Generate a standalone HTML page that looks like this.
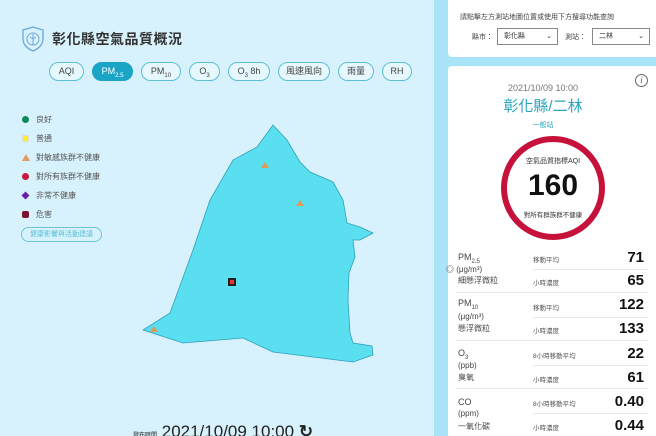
<!DOCTYPE html>
<html><head><meta charset="utf-8"><style>
*{margin:0;padding:0;box-sizing:border-box}
html,body{width:656px;height:436px;overflow:hidden}
body{background:#a9e3f8;font-family:"Liberation Sans","Noto Sans CJK TC",sans-serif;position:relative;color:#333}
.left{position:absolute;left:0;top:0;width:434px;height:436px;background:#d7f2fd}
.title{position:absolute;left:52px;top:29px;font-size:14px;font-weight:bold;color:#333;letter-spacing:0.5px}
.tabs .t{position:absolute;top:62px;height:19px;border:1px solid #5bbfd3;border-radius:10px;font-size:9px;color:#444;text-align:center;line-height:17px;background:#e6f7fd}
.tabs .on{background:#1aa5c6;color:#fff;border-color:#1aa5c6}
sub{font-size:6px}
.lg{position:absolute;left:22px;font-size:8px;color:#555}
.lg i{display:inline-block;width:7px;height:7px;margin-right:7px;vertical-align:-1px}
.btn{position:absolute;left:21px;top:227px;width:81px;height:15px;border:1px solid #6cc5d6;border-radius:8px;font-size:7px;color:#5bbfd3;text-align:center;line-height:13px}
.card1{position:absolute;left:448px;top:0;width:208px;height:57px;background:#fff;border-radius:0 0 0 4px}
.card2{position:absolute;left:448px;top:66px;width:208px;height:370px;background:#fff;border-radius:4px 0 0 0}
.sel{position:absolute;top:28px;height:17px;border:1px solid #888;font-size:7px;line-height:15px;padding-left:6px;color:#333}
.row{position:absolute;left:10px;width:190px;font-size:8px;color:#444}
.lab{position:absolute;left:85px;font-size:6.5px;color:#555}
.val{position:absolute;right:12px;font-size:15px;font-weight:bold;color:#111}
.ln{position:absolute;height:1px;background:#e8e8e8}
</style></head><body>
<div class="left">
<svg style="position:absolute;left:21px;top:26px" width="24" height="26" viewBox="0 0 24 26"><path d="M12 1 L22 4 V13 C22 19 17 23 12 25 C7 23 2 19 2 13 V4 Z" fill="none" stroke="#6aa6d6" stroke-width="1.3"/><circle cx="12" cy="13" r="6" fill="none" stroke="#6aa6d6" stroke-width="1"/><path d="M12 8 V19 M12 13 L9 11 M12 13 L15 11" stroke="#6aa6d6" stroke-width="1"/></svg>
<div class="title">彰化縣空氣品質概況</div>
<div class="tabs">
<div class="t" style="left:49px;width:35px">AQI</div>
<div class="t on" style="left:92px;width:41px">PM<sub>2.5</sub></div>
<div class="t" style="left:141px;width:40px">PM<sub>10</sub></div>
<div class="t" style="left:189px;width:31px">O<sub>3</sub></div>
<div class="t" style="left:228px;width:42px">O<sub>3</sub> 8h</div>
<div class="t" style="left:278px;width:52px">風速風向</div>
<div class="t" style="left:338px;width:36px">雨量</div>
<div class="t" style="left:382px;width:30px">RH</div>
</div>
<div class="lg" style="top:114px"><i style="background:#0c8a5a;border-radius:50%"></i>良好</div>
<div class="lg" style="top:133px"><i style="background:#f5f02a;border:1px solid #ddd"></i>普通</div>
<div class="lg" style="top:152px"><i style="width:0;height:0;border-left:4px solid transparent;border-right:4px solid transparent;border-bottom:7px solid #e89a5a;margin-right:6px"></i>對敏感族群不健康</div>
<div class="lg" style="top:171px"><i style="background:#c8173c;border-radius:50%"></i>對所有族群不健康</div>
<div class="lg" style="top:190px"><i style="background:#6a1fa8;transform:rotate(45deg) scale(.8)"></i>非常不健康</div>
<div class="lg" style="top:209px"><i style="background:#7a1530;border-radius:2px"></i>危害</div>
<div class="btn">健康影響與活動建議</div>
<svg style="position:absolute;left:0;top:0" width="434" height="436"><path d="M273 125 L287 140 L300 162 L310 172 L333 182 L343 200 L347 223 L360 227 L373 233 L360 240 L353 240 L355 257 L349 273 L348 300 L350 333 L353 343 L372 346 L373 355 L353 362 L273 352 L243 338 L183 343 L143 330 L170 313 L193 250 L210 200 L233 160 L257 147 Z" fill="#59dff0" stroke="#2f9fb6" stroke-width="0.8"/>
<path d="M265 162 L269 168 L261 168Z M300 200 L304 206 L296 206Z M154 326 L158 332 L150 332Z" fill="#e0995a"/>
<rect x="228" y="278" width="8" height="8" fill="#222"/><rect x="230" y="280" width="4" height="4" fill="#e33"/></svg>
<div style="position:absolute;left:133px;top:422px;font-size:17px;color:#222;white-space:nowrap"><span style="font-size:6px">發布時間</span> 2021/10/09 10:00 <b>↻</b></div>
</div>
<div class="card1">
<div style="position:absolute;left:12px;top:12px;font-size:7px;color:#444">請點擊左方測站地圖位置或使用下方搜尋功能查詢</div>
<div style="position:absolute;left:24px;top:32px;font-size:7px;color:#444">縣市：</div>
<div class="sel" style="left:49px;width:61px">彰化縣<span style="position:absolute;right:5px;top:0">⌄</span></div>
<div style="position:absolute;left:117px;top:32px;font-size:7px;color:#444">測站：</div>
<div class="sel" style="left:144px;width:58px">二林<span style="position:absolute;right:5px;top:0">⌄</span></div>
</div>
<div class="card2">
<div style="position:absolute;left:187px;top:8px;width:13px;height:13px;border:1px solid #666;border-radius:50%;font-size:9px;font-style:italic;text-align:center;line-height:11px;color:#555;font-family:'Liberation Serif',serif">i</div>
<div style="position:absolute;left:0;width:190px;top:17px;text-align:center;font-size:9px;color:#777">2021/10/09 10:00</div>
<div style="position:absolute;left:0;width:190px;top:29px;text-align:center;font-size:15px;color:#27a4bd">彰化縣/二林</div>
<div style="position:absolute;left:0;width:190px;top:54px;text-align:center;font-size:7px;color:#27a4bd">一般站</div>
<div style="position:absolute;left:53px;top:70px;width:104px;height:104px;border:6px solid #c6123a;border-radius:50%"></div>
<div style="position:absolute;left:0;width:210px;top:90px;text-align:center;font-size:7px;color:#333">空氣品質指標AQI</div>
<div style="position:absolute;left:0;width:210px;top:103px;text-align:center;font-size:30px;font-weight:bold;color:#111">160</div>
<div style="position:absolute;left:0;width:210px;top:143px;text-align:center;font-size:6.5px;color:#333">對所有群族群不健康</div>
<div class="row" style="top:186px;font-size:9px">PM<sub>2.5</sub></div>
<div class="row" style="top:198px;left:-2px;font-size:8px">◎ (μg/m³)</div>
<div class="row" style="top:209px;font-size:8px">細懸浮微粒</div>
<div class="lab" style="top:188px">移動平均</div><div class="val" style="top:183px">71</div>
<div class="lab" style="top:211px">小時濃度</div><div class="val" style="top:206px">65</div>
<div class="ln" style="left:85px;width:115px;top:203px"></div>
<div class="ln" style="left:8px;width:192px;top:226px"></div>
<div class="row" style="top:232px;font-size:9px">PM<sub>10</sub></div>
<div class="row" style="top:246px">(μg/m³)</div>
<div class="row" style="top:257px">懸浮微粒</div>
<div class="lab" style="top:236px">移動平均</div><div class="val" style="top:230px">122</div>
<div class="lab" style="top:259px">小時濃度</div><div class="val" style="top:254px">133</div>
<div class="ln" style="left:85px;width:115px;top:251px"></div>
<div class="ln" style="left:8px;width:192px;top:274px"></div>
<div class="row" style="top:282px;font-size:9px">O<sub>3</sub></div>
<div class="row" style="top:295px">(ppb)</div>
<div class="row" style="top:306px">臭氧</div>
<div class="lab" style="top:284px">8小時移動平均</div><div class="val" style="top:279px">22</div>
<div class="lab" style="top:308px">小時濃度</div><div class="val" style="top:303px">61</div>
<div class="ln" style="left:85px;width:115px;top:299px"></div>
<div class="ln" style="left:8px;width:192px;top:322px"></div>
<div class="row" style="top:331px;font-size:9px">CO</div>
<div class="row" style="top:343px">(ppm)</div>
<div class="row" style="top:355px">一氧化碳</div>
<div class="lab" style="top:332px">8小時移動平均</div><div class="val" style="top:327px">0.40</div>
<div class="lab" style="top:356px">小時濃度</div><div class="val" style="top:351px">0.44</div>
<div class="ln" style="left:85px;width:115px;top:347px"></div>
</div>
</body></html>
